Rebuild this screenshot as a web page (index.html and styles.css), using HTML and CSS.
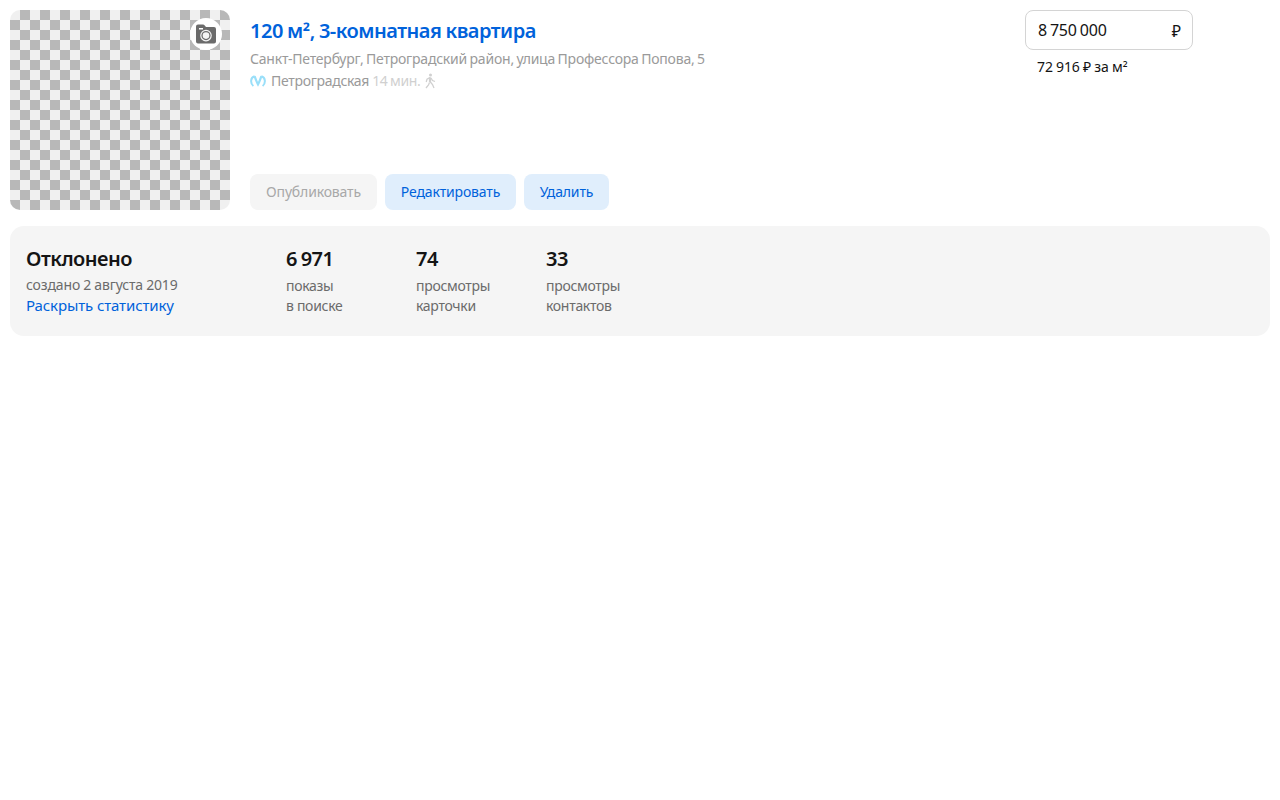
FILE: index.html
```html
<!DOCTYPE html>
<html lang="ru">
<head>
<meta charset="utf-8">
<title>120 м², 3-комнатная квартира</title>
<link rel="stylesheet" href="styles.css">
</head>
<body>
<article class="offer">
  <div class="main">
    <div class="photo">
      <span class="photo-badge">
        <svg width="20" height="20" viewBox="0 0 20 20"><path fill="#6b6b6b" fill-rule="evenodd" d="M0 2.500Q0 .5 2 .5h5q1 0 1.700.9L10 3H18q2 0 2 2v12.500q0 2-2 2H2q-2 0-2-2zM3 4v1.600h4V4z"/><circle cx="10" cy="11.600" r="5.200" fill="none" stroke="#f4f4f4" stroke-width="1.200"/><circle cx="10" cy="11.600" r="3.300" fill="#f4f4f4"/></svg>
      </span>
    </div>
    <div class="info">
      <div>
        <a class="title">120 м<span class="sq">²</span>, 3-комнатная квартира</a>
        <div class="address">Санкт-Петербург, Петроградский район, улица Профессора Попова, 5</div>
        <div class="metro">
          <svg class="metro-icon" width="16" height="12" viewBox="0 0 16 12" fill="none" stroke="#99dff9"><path stroke-width="2" d="M4.600 1.200C.2 2.200.2 8.600 3.400 11M11.400 1.200c4.400 1 4.400 7.400 1.200 9.800"/><path stroke-width="2.200" d="M4.600 1.200C5.400 3.500 6.400 6.500 8 9.500 9.600 6.500 10.600 3.500 11.400 1.200"/></svg>
          <span class="station">Петроградская</span>
          <span class="time">14 мин.</span>
          <svg class="walk" width="12" height="16" viewBox="0 0 12 16" fill="none" stroke="#d0d0d0" stroke-width="1.300"><circle cx="6.500" cy="2" r="1.500" fill="#d0d0d0" stroke="none"/><path stroke-width="2.200" d="M6 4.300V9"/><path d="M6 8.500l2.500 3 1.500 3.500M5.500 9.500L4.500 12 2 15M6 4.500L3 6.200 2.200 9M7 5l1.500 2.500L11 8.500"/></svg>
        </div>
      </div>
      <div class="actions">
        <button class="btn btn-disabled">Опубликовать</button>
        <button class="btn btn-edit">Редактировать</button>
        <button class="btn btn-delete">Удалить</button>
      </div>
    </div>
    <div class="price">
      <div class="price-field"><span class="amount">8 750 000</span><span class="rub">₽</span></div>
      <div class="price-unit">72 916 ₽ за м<span class="sq">²</span></div>
    </div>
  </div>
  <section class="stats">
    <div class="status">
      <div class="value">Отклонено</div>
      <div class="created">создано 2 августа 2019</div>
      <a class="expand">Раскрыть статистику</a>
    </div>
    <div class="stat"><div class="value num">6 971</div><div class="label">показы<br>в поиске</div></div>
    <div class="stat"><div class="value num">74</div><div class="label">просмотры<br>карточки</div></div>
    <div class="stat"><div class="value num">33</div><div class="label">просмотры<br>контактов</div></div>
  </section>
</article>
</body>
</html>
```
FILE: styles.css
```css
* { box-sizing: border-box; }
body { margin: 0; background: #fff; color: #141414; font: 14px/20px "Noto Sans", sans-serif; white-space: nowrap; }
.offer { padding: 10px; }
.main { display: flex; height: 200px; }
.photo { position: relative; width: 220px; height: 200px; border-radius: 10px; background: repeating-conic-gradient(#b8b8b8 0 25%, #f0f0f0 0 50%) 0 0 / 20px 20px; }
.photo-badge { position: absolute; top: 8px; right: 8px; width: 32px; height: 32px; border-radius: 50%; background: #fff; display: flex; align-items: center; justify-content: center; }
.info { flex: 1; padding-left: 20px; padding-top: 9px; display: flex; flex-direction: column; justify-content: space-between; }
.title { display: block; font-size: 20px; line-height: 24px; font-weight: 600; letter-spacing: -.5px; word-spacing: -.5px; color: #0062db; }
.sq { vertical-align: -1px; line-height: 0; }
.address { margin-top: 6px; color: #9a9a9a; letter-spacing: -.21px; word-spacing: -.95px; }
.metro { display: flex; align-items: center; margin-top: 2px; height: 20px; color: #9a9a9a; }
.metro-icon { margin-right: 5px; }
.station { letter-spacing: -.3px; }
.time { color: #d0d0d0; margin-left: 3px; letter-spacing: -.3px; word-spacing: -.9px; }
.walk { margin-left: 3px; }
.actions { display: flex; gap: 8px; }
.btn { width: 127px; height: 36px; padding: 0; border: 0; border-radius: 8px; background: #e0eefc; color: #0062db; font: 14px/36px "Noto Sans", sans-serif; letter-spacing: -.15px; }
.btn-disabled { background: #f5f5f5; color: #a8a8a8; }
.btn-edit { width: 131px; }
.btn-delete { width: 85px; }
.price { width: 245px; }
.price-field { width: 168px; height: 40px; border: 1px solid #d4d4d4; border-radius: 8px; padding: 0 11px 0 12px; display: flex; justify-content: space-between; align-items: center; font-size: 16px; }
.amount { letter-spacing: -.2px; word-spacing: -1px; }
.rub { padding-top: 1px; }
.price-unit { margin-top: 7px; padding-left: 12px; letter-spacing: -.1px; word-spacing: -.3px; }
.stats { display: flex; height: 110px; margin-top: 16px; padding: 20px 16px; border-radius: 14px; background: #f5f5f5; }
.status { width: 260px; }
.stat { width: 130px; }
.value { font-size: 20px; line-height: 26px; font-weight: 600; letter-spacing: -.5px; }
.num { word-spacing: -1px; }
.created { margin-top: 3px; color: #6b6b6b; letter-spacing: -.15px; word-spacing: -.3px; }
.label { margin-top: 4px; color: #6b6b6b; letter-spacing: -.3px; }
.expand { display: block; font-size: 15px; letter-spacing: -.12px; color: #0062db; }
```
